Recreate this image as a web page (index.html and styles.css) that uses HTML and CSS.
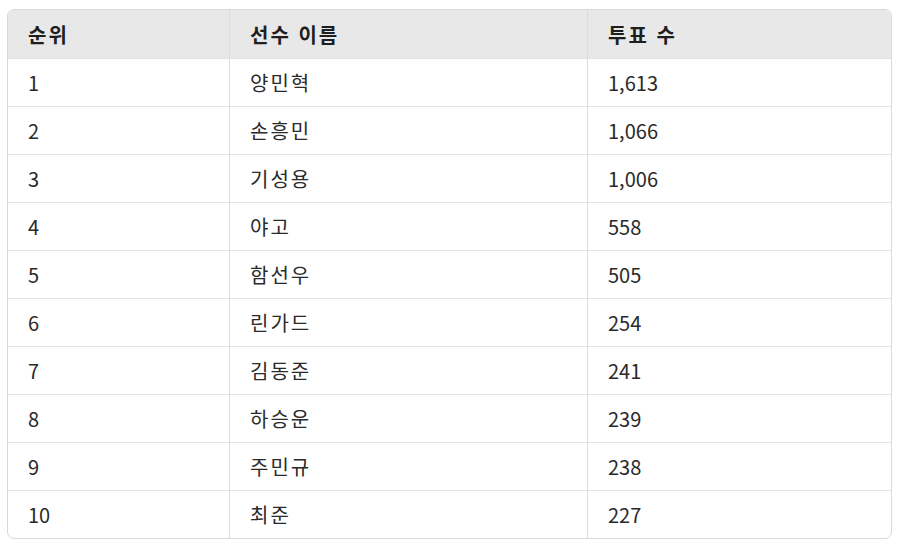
FILE: index.html
```html
<!DOCTYPE html>
<html lang="ko">
<head>
<meta charset="utf-8">
<link rel="stylesheet" href="styles.css">
</head>
<body>
<div class="wrap">
<table class="votes">
<thead>
<tr><th class="c1">순위</th><th class="c2">선수 이름</th><th class="c3">투표 수</th></tr>
</thead>
<tbody>
<tr><td>1</td><td>양민혁</td><td>1,613</td></tr>
<tr><td>2</td><td>손흥민</td><td>1,066</td></tr>
<tr><td>3</td><td>기성용</td><td>1,006</td></tr>
<tr><td>4</td><td>야고</td><td>558</td></tr>
<tr><td>5</td><td>함선우</td><td>505</td></tr>
<tr><td>6</td><td>린가드</td><td>254</td></tr>
<tr><td>7</td><td>김동준</td><td>241</td></tr>
<tr><td>8</td><td>하승운</td><td>239</td></tr>
<tr><td>9</td><td>주민규</td><td>238</td></tr>
<tr><td>10</td><td>최준</td><td>227</td></tr>
</tbody>
</table>
</div>
</body>
</html>
```

FILE: styles.css
```css
html, body {
  margin: 0;
  padding: 0;
  background: #fff;
}
body {
  padding: 9px 8px 0 7px;
  font-family: "Noto Sans CJK KR", "Noto Sans", sans-serif;
  color: #222;
}
.wrap {
  border: 1px solid #d9d9d9;
  border-radius: 7px;
  overflow: hidden;
  width: 883px;
}
.votes {
  width: 100%;
  border-collapse: collapse;
  table-layout: fixed;
  font-size: 20px;
}
.c1 { width: 181px; }
.c2 { width: 317px; }
.votes th, .votes td {
  text-align: left;
  padding: 0 20px;
  border-right: 1px solid #dcdcdc;
  border-bottom: 1px solid #e3e3e3;
}
.votes th:last-child, .votes td:last-child {
  border-right: none;
}
.votes tr:last-child td {
  border-bottom: none;
}
.votes th {
  background: #e8e8e8;
  font-weight: 700;
  height: 48px;
  color: #1e1e1e;
  letter-spacing: 2px;
}
.votes td {
  height: 47px;
  font-weight: 400;
  color: #2a2a2a;
}
.votes td:nth-child(2) {
  letter-spacing: 2px;
}
```
